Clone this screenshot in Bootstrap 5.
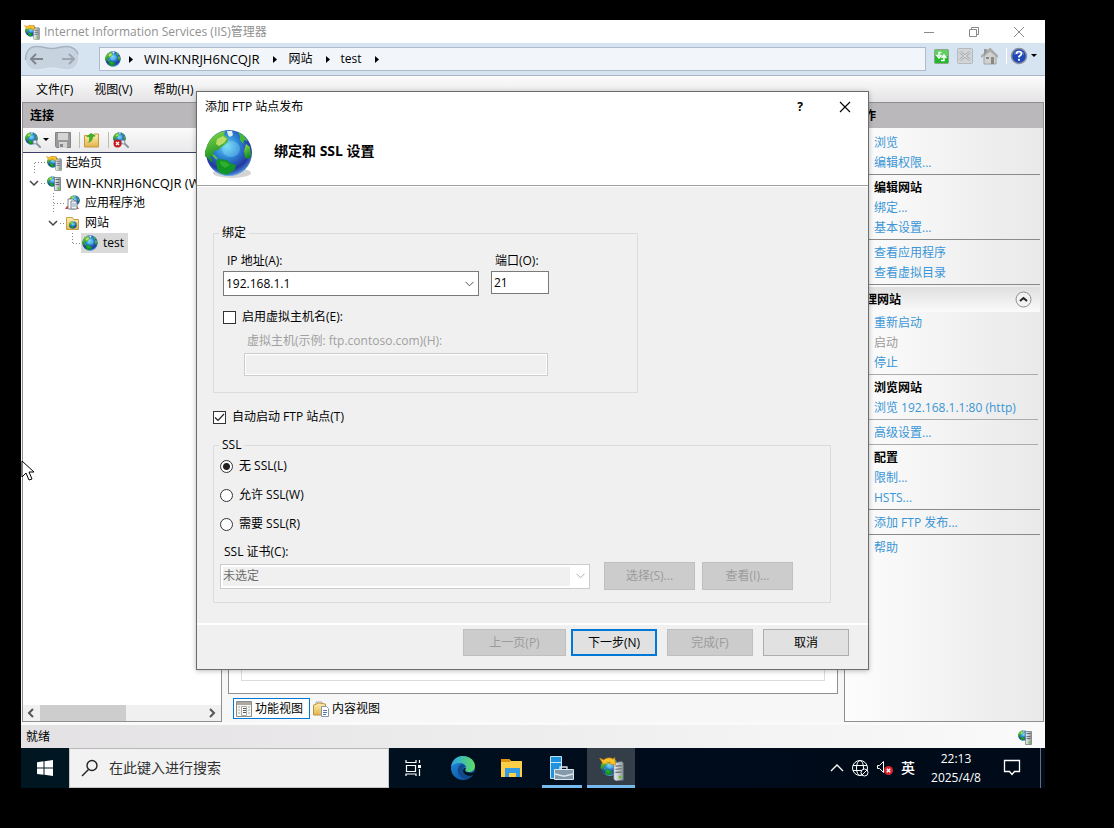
<!DOCTYPE html>
<html lang="zh-CN">
<head>
<meta charset="utf-8">
<meta name="viewport" content="width=device-width, initial-scale=1">
<title>Internet Information Services (IIS)管理器</title>
<link href="https://cdn.jsdelivr.net/npm/bootstrap@5.3.0/dist/css/bootstrap.min.css" rel="stylesheet">
<style>
body{background:#000;color:#000;font:12px/20px "Open Sans","Noto Sans CJK SC",sans-serif;padding:20px 69px 40px 21px}
svg{flex:none;display:block}
button{font:inherit;color:inherit;border:0;background:none;padding:0}
.desktop{position:relative;background:#f7f7f7;min-width:0}
.titlebar{height:23px;background:#fff;color:#919191;padding-left:3px;gap:4px}
.captions{gap:31px;padding-right:19px}
.addressbar{height:33px;background:#d6e3f1;border-bottom:1px solid #aab4c4;padding:0 7px 2px 3px}
.crumbs{height:24px;background:#f2f5fa;border:1px solid #afbaca;padding-left:5px;margin:2px 8px 0 19px}
.crumbs a,.menubar a{color:#000;text-decoration:none}
.host-name{font-size:13px}
.help{margin-left:-5px}
.menubar{height:26px;background:linear-gradient(#fcfcfc,#e5e3e5);padding:2px 15px 0;gap:21px}
.pane{border:1px solid #8f8f8f}
.pane-title{height:25px;background:#bab8bb;font-weight:700;line-height:25px;padding:0 7px}
.left-pane{width:200px;margin-left:1px;background:#fff}
.tools{height:25px;background:linear-gradient(#fbfbfb,#e9e8ea);border-bottom:1px solid #3d4066;padding:0 2px}
.vline{width:1px;height:16px;background:#bdbda8}
.tree-row{height:20px;white-space:nowrap;overflow:hidden}
.tree-row span{padding-left:4px}
.chosen{background:#d9d9d9;padding:0 4px 0 1px}
.chosen span{padding-left:5px}
.hscroll{height:16px;background:#f0f0f0}
.thumb{width:86px;background:#cdcdcd}
.middle{padding:0 6px}
.feature{background:#fff;padding:0 12px 12px;border:1px solid #8f8f8f;border-top:0}
.feature-list{border:1px solid #dcdcdc;border-top:0}
.view-tabs{height:28px;padding:4px 5px}
.view-tab{height:21px;border:1px solid transparent;padding:0 6px 0 2px;gap:3px}
.view-tab.current{border-color:#0078d7;background:#fff}
.right-pane{width:200px;margin-right:1px;background:linear-gradient(90deg,#fdfdfd,#e9e9e9)}
.actions a,.actions b,.actions i{display:block;height:20px;line-height:22px;padding-left:29px;font-style:normal;white-space:nowrap}
.actions a{color:#3a96d6;text-decoration:none}
.actions i{color:#9b9b9b}
.actions hr{margin:2px 3px 2px 0;border:0;height:1px;background:#8a8a8a;opacity:1}
.actions hr.soft{margin-right:5px;background:#adadad}
.group{height:25px;margin-right:3px;background:linear-gradient(#e0dfe0,#fbfbfb);font-weight:700}
.status{height:26px;background:linear-gradient(90deg,#e3e1e3,#fafafa);border-top:3px solid #fafafa;padding:0 12px 0 5px}
.taskbar{height:40px;background:linear-gradient(90deg,#001722,#000c1c 60%,#000a18)}
.start{width:48px;height:40px}
.search{width:320px;height:40px;background:#f2f2f2;border:1px solid #c5c5c5;border-top-color:#b7b7b7;padding-left:11px;gap:11px}
.search input{border:0;background:none;font:14px/20px "Open Sans","Noto Sans CJK SC",sans-serif;min-width:0;outline:0;padding:0}
.search input::placeholder{color:#303030;opacity:1}
.app{width:49px;height:40px}
.app.open{border-bottom:3px solid #76b9ed;padding-top:3px;width:40px;margin:0 5px 0 6px}
.app.active{background:#343e48;width:48px;margin:0}
.tray{color:#fff;gap:8px}
.tray .clock{width:64px;text-align:center;line-height:19px;padding-left:2px}
.tray .ime{font-size:14px;font-weight:500}
.edge-line{width:1px;height:40px;background:#65707c;margin:0 4px 0 11px}
.wizard{position:absolute;left:175px;top:71px;width:673px;background:#f0f0f0;border:1px solid #696d6d;box-shadow:0 1px 5px #0004}
.wizard-head{background:#fff;border-bottom:1px solid #a0a0a0;height:94px}
.wizard-title{height:29px;padding:0 17px 0 8px;gap:36px}
.wizard-name{font-size:14px;font-weight:700;margin:0;line-height:20px;padding-left:20px}
.wizard-body{padding:36px 37px 20px 16px;border-top:1px solid #fff}
fieldset{border:1px solid #dcdcdc}
legend{float:none;width:auto;font-size:12px;line-height:20px;margin:0;padding:0 3px}
.binding{width:425px;padding:0 9px;height:170px}
.binding legend{margin-left:-4px}
.binding .option{margin-top:11px}
.vhost{padding:4px 0 0 21px}
.vhost label{padding:0 0 2px 3px}
.auto-start{margin:14px 0 8px}
.field{font:inherit;color:#000;background:#fff;border:1px solid #7a7a7a;border-radius:0;padding:0 2px;height:23px;outline:0;min-width:0}
.field:disabled{border-color:#ccc;background:#f0f0f0;box-shadow:inset 0 0 0 1px #fff}
select.field{appearance:none;height:25px;background:#fff url("data:image/svg+xml,%3Csvg xmlns='http://www.w3.org/2000/svg' width='9' height='6'%3E%3Cpath d='M.5.8l4 4 4-4' fill='none' stroke='%23555'/%3E%3C/svg%3E") no-repeat right 4px center}
select.field:disabled{color:#6d6d6d;opacity:1;box-shadow:none;border-color:#ccc;background:url("data:image/svg+xml,%3Csvg xmlns='http://www.w3.org/2000/svg' width='9' height='6'%3E%3Cpath d='M.5.8l4 4 4-4' fill='none' stroke='%23aaa'/%3E%3C/svg%3E") no-repeat right 4px center,linear-gradient(#f0f0f0,#f0f0f0) no-repeat 2px 2px/calc(100% - 21px) calc(100% - 4px),#fff}
.tick{appearance:none;width:13px;height:13px;flex:none;margin:0;background:#fff center/11px 11px no-repeat;border:1px solid #333}
.tick[type=radio]{border-radius:50%}
.tick[type=checkbox]:checked{background-image:url("data:image/svg+xml,%3Csvg xmlns='http://www.w3.org/2000/svg' viewBox='0 0 11 11'%3E%3Cpath d='M1 5.5l3 3L10 2' fill='none' stroke='%23222' stroke-width='1.2'/%3E%3C/svg%3E")}
.tick[type=radio]:checked{background-image:radial-gradient(#222 0 3px,#fff 4px)}
.option{gap:6px;height:20px}
.muted-label{color:#a0a0a0}
.ssl{height:168px;padding:0 6px}
.ssl legend{margin-left:-1px}
.ssl-modes{gap:9px;padding-top:1px}
.push{background:#e1e1e1;border:1px solid #adadad;height:28px;width:86px}
.push:disabled{background:#ccc;border-color:#bfbfbf;color:#9b9b9b}
.push.primary{border:2px solid #0078d7}
.wizard-foot{border-top:2px solid #fff;height:46px;padding:4px 19px 0;gap:10px}
.wizard-foot .push{height:27px}
.pointer{position:absolute;left:0;top:440px}
</style>
</head>
<body class="min-vh-100 d-flex">
<svg width="0" height="0" class="position-absolute" aria-hidden="true">
<defs>
<radialGradient id="sea" cx=".45" cy=".35" r=".65"><stop offset="0" stop-color="#6fd8f5"/><stop offset=".4" stop-color="#2c86d6"/><stop offset=".8" stop-color="#2437a0"/><stop offset="1" stop-color="#4b8ed8"/></radialGradient>
<linearGradient id="land" x2=".3" y2="1"><stop offset="0" stop-color="#8fe04a"/><stop offset="1" stop-color="#128a22"/></linearGradient>
<linearGradient id="box" x2="1"><stop offset="0" stop-color="#f1f3f4"/><stop offset="1" stop-color="#8f979c"/></linearGradient>
<linearGradient id="gold" x2="0" y2="1"><stop offset="0" stop-color="#fff0b0"/><stop offset="1" stop-color="#e3b34d"/></linearGradient>
<linearGradient id="edgeA" x2="1" y2="0"><stop offset="0" stop-color="#2ba5e6"/><stop offset="1" stop-color="#5fdc61"/></linearGradient>
<linearGradient id="edgeB" x2=".8" y2="1"><stop offset="0" stop-color="#2391df"/><stop offset="1" stop-color="#0c4c9e"/></linearGradient>
<symbol id="globe" viewBox="0 0 48 48">
<circle cx="24" cy="24" r="23" fill="url(#sea)"/>
<path d="M2 17C5 9 10 5 16 3l4-1-1 4 3 2 1 5-3 3-4 2-3 3-4 1-1 4-3 2 3 4-2 1-4-5-4-1z" fill="url(#land)"/>
<path d="M12 10l6-3 4 3-3 4-5 3-3-2z" fill="#b9dd68"/>
<path d="M22 2h5l1 4-3 2-2-2z" fill="#e3f1ec"/>
<path d="M33 3l5 3 5 6-4-1-1 4-3-4v-4z" fill="#45b83a"/>
<path d="M41 15l4 3 1 8-2 4-4-1-1-7z" fill="url(#land)"/>
<path d="M11 32l4-2 7 1 3 3 6 2-1 4-5 4-4 2-6-2-3-5z" fill="#109526"/>
<path d="M15 32l6 1 4 3-5 3-4-3z" fill="#3ebb2f" opacity=".7"/>
<path d="M8 26l4 4" stroke="#58c33d" stroke-width="2"/>
<ellipse cx="26" cy="20" rx="9" ry="8" fill="#9decff" opacity=".3"/>
<path d="M9 40q15 12 30 0-6 7-15 7T9 40z" fill="#6fb8ef" opacity=".7"/>
</symbol>
<symbol id="iis" viewBox="0 0 16 16"><use href="#globe" x="1" y="1" width="12" height="12"/><path d="M9.500 4.500L14.500 3.500l1 .8v11l-4.500.700-1.500-1z" fill="url(#box)" stroke="#6c7479" stroke-width=".5"/><path d="M10.500 6.500l4-.3M10.500 8.500l4-.3M10.500 10.500l4-.3" stroke="#5a6368" stroke-width=".7"/><circle cx="13.500" cy="13.500" r=".9" fill="#55cf1d"/><path d="M.5 1.500L3 2.500Q6 .2 9 2l1-1 .5 4.500L6.500 5l1-1Q5 3 3 5.500z" fill="#ffc629" stroke="#d6860e" stroke-width=".5"/></symbol>
<symbol id="host" viewBox="0 0 16 16"><use href="#globe" x="1" y="1" width="11" height="11"/><path d="M8.500 2.500h6v13h-6z" fill="url(#box)" stroke="#747c81" stroke-width=".8"/><path d="M9.500 4.500h4M9.500 7.500h4M9.500 9.500h4" stroke="#4c565b" stroke-width=".8"/><circle cx="12.500" cy="13.500" r="1.100" fill="#55cf1d"/></symbol>
<symbol id="globefind" viewBox="0 0 16 16"><use href="#globe" x="0" y="0" width="13" height="13"/><path d="M11 11l4 4" stroke="#8d969c" stroke-width="2" stroke-linecap="round"/><circle cx="10" cy="10" r="2" fill="#dcecf5" stroke="#8d969c"/></symbol>
</defs>
</svg>

<main class="desktop d-flex flex-column flex-grow-1">
<header>
<div class="titlebar d-flex align-items-center">
<svg width="16" height="16"><use href="#iis"/></svg><span class="flex-grow-1">Internet Information Services (IIS)管理器</span>
<div class="captions d-flex align-items-center">
<button aria-label="最小化"><svg width="14" height="12"><path d="M2 6.500h10" stroke="#8a8a8a"/></svg></button>
<button aria-label="还原"><svg width="14" height="12" fill="none" stroke="#8a8a8a"><path d="M2.500 3.500h7v7h-7zM4.500 3.500v-2h7v7h-2"/></svg></button>
<button aria-label="关闭"><svg width="14" height="12"><path d="M2 1l10 10M12 1L2 11" stroke="#8a8a8a"/></svg></button>
</div>
</div>
<div class="addressbar d-flex align-items-center">
<svg width="56" height="28" viewBox="0 0 56 28" fill="none"><path d="M12 2C18 1 22 4 28 4s9-3 15-2c8 1 12 6 12 12s-4 12-11 12c-6 0-9-2-16-2s-10 2-16 2C5 26 1 20 1 14S5 3 12 2z" fill="#c8d3e0" stroke="#e2ebf5"/><path d="M1.500 16C1.500 7 6 2.500 12 2.500c6-.5 10 2 16 2s9-2.500 15-2c7 .5 10 4 11 8" stroke="#a6b2c1" stroke-width="1.500"/><path d="M7 15h12M12 10l-5 5 5 5" stroke="#7e868f" stroke-width="2"/><path d="M38 15h12M45 10l5 5-5 5" stroke="#9ca6b2" stroke-width="2"/></svg>
<nav class="crumbs d-flex align-items-center flex-grow-1" aria-label="路径">
<svg width="16" height="16"><use href="#globe"/></svg>
<svg width="23" height="8"><path d="M8 1v7l4-3.500z" fill="#000"/></svg><a class="host-name" href="#">WIN-KNRJH6NCQJR</a>
<svg width="29" height="8"><path d="M13 1v7l4-3.500z" fill="#000"/></svg><a href="#">网站</a>
<svg width="28" height="8"><path d="M13 1v7l4-3.500z" fill="#000"/></svg><a href="#">test</a>
<svg width="28" height="8"><path d="M13 1v7l4-3.500z" fill="#000"/></svg>
</nav>
<div class="d-flex align-items-center gap-2 pb-1">
<button aria-label="刷新"><svg width="15" height="15"><rect x=".5" y=".5" width="14" height="14" rx="1" fill="#21b82b" stroke="#8da78d"/><path d="M1 1h13v6H1z" fill="#7ad976" opacity=".7"/><path d="M7.500 3.500H5V7M2.500 6L5 9l2.500-3M7 11.500h3V8M7.500 9L10 6l2.500 3" fill="none" stroke="#fff" stroke-width="1.500"/></svg></button>
<button aria-label="停止" disabled><svg width="16" height="16"><rect x=".5" y=".5" width="15" height="15" rx="1" fill="#d2d5d8" stroke="#b5b9bd"/><path d="M3 4l10 8M13 4L3 12" stroke="#a1a5a9" stroke-width="2.500"/><path d="M3 4l10 8M13 4L3 12" stroke="#e8eaeb"/></svg></button>
<button aria-label="主页"><svg width="17" height="17"><path d="M3 8v8h12V8L9 3z" fill="#d1d1cf" stroke="#a2a2a0"/><path d="M0 9l9-8 8 8" fill="none" stroke="#a8a8a6" stroke-width="2"/><path d="M3 1h3v3L3 7z" fill="#989896"/><path d="M10 9h3v7h-3z" fill="#888"/><path d="M5 9h3v2H5z" fill="#888"/></svg></button>
<span class="vline bg-white"></span>
<button aria-label="帮助" class="help d-flex align-items-center"><svg width="18" height="18"><circle cx="9" cy="9" r="7.500" fill="#1d48b5" stroke="#8a8f9d" stroke-width="1.500"/><path d="M4 6q5-5 10 0v2q-5-2-10 0z" fill="#7191dc" opacity=".6"/><path d="M6.500 7q0-2.500 2.500-2.500t2.500 2q0 1.500-2.500 3v1" fill="none" stroke="#fff" stroke-width="1.700"/><circle cx="9" cy="12.800" r="1.100" fill="#fff"/></svg><svg width="10" height="4"><path d="M3 0h6L6 3z" fill="#000"/></svg></button>
</div>
</div>
<nav class="menubar d-flex align-items-center"><a href="#">文件(F)</a><a href="#">视图(V)</a><a href="#">帮助(H)</a></nav>
</header>

<div class="d-flex flex-grow-1">
<aside class="pane left-pane d-flex flex-column">
<div class="pane-title">连接</div>
<div class="tools d-flex align-items-center">
<button aria-label="连接到"><svg width="16" height="16"><use href="#globefind"/></svg></button><svg width="14" height="4"><path d="M2 0h6L5 3z" fill="#000"/></svg>
<svg width="16" height="16"><path d="M.5.5h15v15H1.500l-1-1z" fill="#999" stroke="#868686"/><path d="M3 1h10v7H3z" fill="#d5d5d5"/><path d="M4 10h8v6H4z" fill="#d5d5d5"/><path d="M5 12h3v3H5z" fill="#888"/></svg>
<span class="vline ms-2 me-1"></span>
<svg width="16" height="16"><path d="M.5 3.500h8l2-1.500h4v13H.5z" fill="url(#gold)" stroke="#c39840"/><path d="M3 11q3-1 2-6H2l5-4 5 3-3 1q0 5-6 6z" fill="#42ae2a"/></svg>
<span class="vline ms-2 me-1"></span>
<svg width="16" height="16"><use href="#globefind"/><circle cx="4.500" cy="11.500" r="4" fill="#c41c20"/><path d="M3 10l3 3m0-3l-3 3" stroke="#fff" stroke-width="1.300"/></svg>
</div>
<div class="flex-grow-1">
<div class="tree-row d-flex align-items-center"><svg width="23" height="20" stroke="#888" stroke-dasharray="1 2"><path d="M11.500 10v10M12 9.500h11"/></svg><svg width="16" height="16"><use href="#iis"/></svg><span>起始页</span></div>
<div class="tree-row d-flex align-items-center"><svg width="23" height="20"><path d="M7 8l4 4 4-4" fill="none" stroke="#444" stroke-width="1.500"/><path d="M18 10.500h5" stroke="#888" stroke-dasharray="1 2"/></svg><svg width="16" height="16"><use href="#host"/></svg><span class="host-name">WIN-KNRJH6NCQJR (WIN</span></div>
<div class="tree-row d-flex align-items-center"><svg width="41" height="20" stroke="#888" stroke-dasharray="1 2"><path d="M30.500 0v20M31 10.500h10"/></svg><svg width="17" height="16"><use href="#globe" x="5" y="0" width="11" height="11"/><path d="M1 14l2-3h10l2 3z" fill="#d33a36"/><path d="M4 4h5l2 2v8H4z" fill="#fff" stroke="#7a8490"/><path d="M7 6h5l1 2v6H7z" fill="#eef3f7" stroke="#7a8490"/><path d="M8 9h4M8 11h4" stroke="#8fa5ba"/></svg><span>应用程序池</span></div>
<div class="tree-row d-flex align-items-center"><svg width="42" height="20"><path d="M26 8l4 4 4-4" fill="none" stroke="#444" stroke-width="1.500"/><path d="M37 10.500h5" stroke="#888" stroke-dasharray="1 2"/></svg><svg width="16" height="16"><path d="M1.500 2.500h6l1 2h5v10h-12z" fill="url(#gold)" stroke="#c79e4a"/><use href="#globe" x="4" y="6" width="8" height="8"/></svg><span>网站</span></div>
<div class="tree-row d-flex align-items-center"><svg width="58" height="20" stroke="#888" stroke-dasharray="1 2"><path d="M49.500 0v10M50 10.500h8"/></svg><div class="chosen d-flex align-items-center"><svg width="16" height="16"><use href="#globe"/></svg><span>test</span></div></div>
</div>
<div class="hscroll d-flex justify-content-between align-items-stretch">
<div class="d-flex"><svg width="17" height="16"><path d="M10 4L6 8l4 4" fill="none" stroke="#555" stroke-width="2"/></svg><div class="thumb"></div></div><svg width="17" height="16"><path d="M6 4l4 4-4 4" fill="none" stroke="#555" stroke-width="2"/></svg>
</div>
</aside>

<section class="middle flex-grow-1 d-flex flex-column">
<div class="feature flex-grow-1 d-flex"><div class="feature-list flex-grow-1"></div></div>
<div class="view-tabs d-flex">
<button class="view-tab current d-flex align-items-center"><svg width="16" height="16"><path d="M.5.500h15v15H.5z" fill="#f5f5f1" stroke="#8d8d88"/><path d="M1 1h14v3H1z" fill="#aaa9a4"/><path d="M2 6h2M2 9h2M2 12h2M12 6h2M12 9h2M12 12h2" stroke="#a4b2a2"/><path d="M5.500 5.500h5v9h-5z" fill="#fff" stroke="#aaa"/><path d="M7 7.500h3M7 9.500h3M7 11.500h3" stroke="#555"/></svg>功能视图</button>
<button class="view-tab d-flex align-items-center"><svg width="16" height="16"><path d="M3 1h6v3H3z" fill="#fff" stroke="#aaa"/><path d="M.5 4l3-1 2-1 7 1v11H.5z" fill="url(#gold)" stroke="#bf9444"/><path d="M8.500 5.500h5l2 2v8h-7z" fill="#fff" stroke="#8798b0"/><path d="M10 9.500h4M10 11.500h4M10 13.500h3" stroke="#4a77b6"/></svg>内容视图</button>
</div>
</section>

<aside class="pane right-pane">
<div class="pane-title">操作</div>
<nav class="actions pt-1">
<a href="#">浏览</a><a href="#">编辑权限...</a><hr>
<b>编辑网站</b><a href="#">绑定...</a><a href="#">基本设置...</a><hr>
<a href="#">查看应用程序</a><a href="#">查看虚拟目录</a><hr>
<div class="group d-flex align-items-center justify-content-between px-2">管理网站<button aria-label="折叠"><svg width="17" height="17"><circle cx="8.500" cy="8.500" r="7.500" fill="#f2f2f2" stroke="#8e8e8e"/><path d="M5 10l3.500-3 3.500 3" fill="none" stroke="#222" stroke-width="2"/></svg></button></div>
<a href="#">重新启动</a><i>启动</i><a href="#">停止</a><hr class="soft">
<b>浏览网站</b><a href="#">浏览 192.168.1.1:80 (http)</a><hr class="soft">
<a href="#">高级设置...</a><hr class="soft">
<b>配置</b><a href="#">限制...</a><a href="#">HSTS...</a><hr>
<a href="#">添加 FTP 发布...</a><hr>
<a href="#">帮助</a>
</nav>
</aside>
</div>

<div class="status d-flex align-items-center justify-content-between"><span>就绪</span><svg width="16" height="16"><use href="#host"/></svg></div>

<footer class="taskbar d-flex align-items-center">
<button class="start d-flex align-items-center justify-content-center" aria-label="开始"><svg width="16" height="16" fill="#fff"><path d="M0 2.200L6.500 1.300v6.200H0zM7.500 1.200L16 0v7.500H7.500zM0 8.500h6.500v6.300L0 13.900zM7.500 8.500H16V16l-8.500-1.200z"/></svg></button>
<label class="search d-flex align-items-center"><svg width="17" height="18" fill="none" stroke="#222" stroke-width="1.400"><circle cx="11" cy="6.500" r="5"/><path d="M7.500 10.500L1 17"/></svg><input type="text" placeholder="在此键入进行搜索" aria-label="搜索"></label>
<button class="app d-flex align-items-center justify-content-center" aria-label="任务视图"><svg width="17" height="16" fill="none" stroke="#fff" stroke-width="1.200"><path d="M1 0v2.500h10V0M1.500 5.500h9v6h-9zM1 16v-2h10v2M14.500 0v3M14.500 9v7"/><path d="M13 5h3v3h-3z" fill="#fff" stroke="none"/></svg></button>
<button class="app d-flex align-items-center justify-content-center" aria-label="Edge"><svg width="26" height="26" viewBox="0 0 26 26"><circle cx="13" cy="13" r="12" fill="url(#edgeB)"/><path d="M1.500 10C3 4 8 1 13 1c7 0 12 5 12 10 0 4-3 6-6 6-2 0-4-1-4-2 0 0 1-1 1-2 0-3-3-5-6-5-4 0-7 1-8.500 4z" fill="url(#edgeA)"/><path d="M9 11c-3 4-1 11 6 13 5 0 7-3 9-5-5 2-10 0-11-4-.500-2 1-4 3-3-1-3-5-4-7-1z" fill="#114a8c"/><path d="M15 15c0 2 4 4 9 2l1 1-1 2c-5 2-10 0-11-4 0-2 1-3 3-3z" fill="#001420"/></svg></button>
<button class="app d-flex align-items-center justify-content-center" aria-label="文件资源管理器"><svg width="24" height="20"><path d="M1 1h8l2 2h11v16H1z" fill="#ffcf48"/><path d="M1 1h8l2 2-1 1H1z" fill="#df9712"/><path d="M5 19v-9h15v9h-4v-4H9v4z" fill="#359ce4"/></svg></button>
<button class="app open d-flex align-items-center justify-content-center" aria-label="服务器管理器"><svg width="24" height="25"><path d="M.5.500h11v22H.5z" fill="#2093dc" stroke="#bfe4fa"/><path d="M0 6.500h12" stroke="#c8e7f8"/><path d="M4.500 13.500h19v10h-19z" fill="#8499aa" stroke="#dae7ef"/><path d="M10 13v-2h7v2M5 18l8 2h2l8-2" fill="none" stroke="#dce7ed" stroke-width="1.300"/></svg></button>
<button class="app open active d-flex align-items-center justify-content-center" aria-label="IIS 管理器"><svg width="25" height="25"><use href="#iis"/></svg></button>
<div class="tray d-flex align-items-center ms-auto">
<svg width="14" height="10"><path d="M1 8l6-6 6 6" fill="none" stroke="#fff" stroke-width="1.300"/></svg>
<svg width="17" height="17" fill="none" stroke="#fff"><circle cx="8" cy="8" r="7.500"/><ellipse cx="8" cy="8" rx="3.500" ry="7.500"/><path d="M1 5.500h14M1 10.500h14"/><circle cx="12.500" cy="12.500" r="3.500" fill="#000c1a"/><path d="M10 15l5-5"/></svg>
<svg width="16" height="16"><path d="M.5 5.500h2l4-4v11l-4-4h-2z" fill="none" stroke="#fff"/><circle cx="11.500" cy="10.500" r="4.500" fill="#d92330"/><path d="M9.800 8.800l3.400 3.400m0-3.400l-3.400 3.400" stroke="#fff" stroke-width="1.300"/></svg>
<span class="ime">英</span>
<div class="clock"><div>22:13</div><div>2025/4/8</div></div>
<svg class="ms-2" width="18" height="18"><path d="M1.500 1.500h15v11h-5L9 15.500l-2.500-3h-5z" fill="none" stroke="#fff" stroke-width="1.300"/></svg>
<span class="edge-line"></span>
</div>
</footer>

<section class="wizard" role="dialog" aria-label="添加 FTP 站点发布">
<div class="wizard-head">
<div class="wizard-title d-flex align-items-center"><span class="flex-grow-1">添加 FTP 站点发布</span><button class="fw-bold" aria-label="帮助">?</button><button aria-label="关闭"><svg width="12" height="12"><path d="M1 1l10 10M11 1L1 11" stroke="#000" stroke-width="1.100"/></svg></button></div>
<div class="d-flex ps-2"><svg width="49" height="58" viewBox="0 0 49 58"><ellipse cx="27" cy="52" rx="19" ry="5" fill="#aaa" opacity=".5"/><use href="#globe" x="0" y="8" width="48" height="48"/></svg><div class="pt-3"><h1 class="wizard-name mt-1">绑定和 SSL 设置</h1></div></div>
</div>
<form class="wizard-body" onsubmit="return false">
<fieldset class="binding">
<legend>绑定</legend>
<div class="d-flex pt-2">
<div><label for="ip" class="d-block ps-1">IP 地址(A):</label><select id="ip" class="field d-block" style="width:256px"><option>192.168.1.1</option></select></div>
<div class="ms-2 ps-1"><label for="port" class="d-block ps-1">端口(O):</label><input id="port" class="field d-block" style="width:58px" value="21"></div>
</div>
<div class="option d-flex align-items-center"><input id="vh" class="tick" type="checkbox"><label for="vh">启用虚拟主机名(E):</label></div>
<div class="vhost"><label for="host-name" class="muted-label d-block">虚拟主机(示例: ftp.contoso.com)(H):</label><input id="host-name" class="field d-block" style="width:304px" disabled></div>
</fieldset>
<div class="option auto-start d-flex align-items-center"><input id="auto" class="tick" type="checkbox" checked><label for="auto">自动启动 FTP 站点(T)</label></div>
<fieldset class="ssl">
<legend>SSL</legend>
<div class="ssl-modes d-grid">
<div class="option d-flex align-items-center"><input id="s1" class="tick" name="ssl" type="radio" checked><label for="s1">无 SSL(L)</label></div>
<div class="option d-flex align-items-center"><input id="s2" class="tick" name="ssl" type="radio"><label for="s2">允许 SSL(W)</label></div>
<div class="option d-flex align-items-center"><input id="s3" class="tick" name="ssl" type="radio"><label for="s3">需要 SSL(R)</label></div>
</div>
<label for="cert" class="d-block ps-1 pt-2">SSL 证书(C):</label>
<div class="d-flex align-items-center"><select id="cert" class="field" style="width:370px" disabled><option>未选定</option></select><button class="push" style="width:91px;margin:0 7px 0 14px" disabled>选择(S)...</button><button class="push" style="width:91px" disabled>查看(I)...</button></div>
</fieldset>
</form>
<div class="wizard-foot d-flex justify-content-end"><button class="push" style="width:103px;margin-right:-5px" disabled>上一页(P)</button><button class="push primary">下一步(N)</button><button class="push" disabled>完成(F)</button><button class="push">取消</button></div>
</section>
<svg class="pointer" width="13" height="22"><path d="M1 1v16l4-4 3 7 3-1-3-7h5z" fill="#fff" stroke="#000"/></svg>
</main>
<script src="https://cdn.jsdelivr.net/npm/bootstrap@5.3.0/dist/js/bootstrap.bundle.min.js"></script>
</body>
</html>
